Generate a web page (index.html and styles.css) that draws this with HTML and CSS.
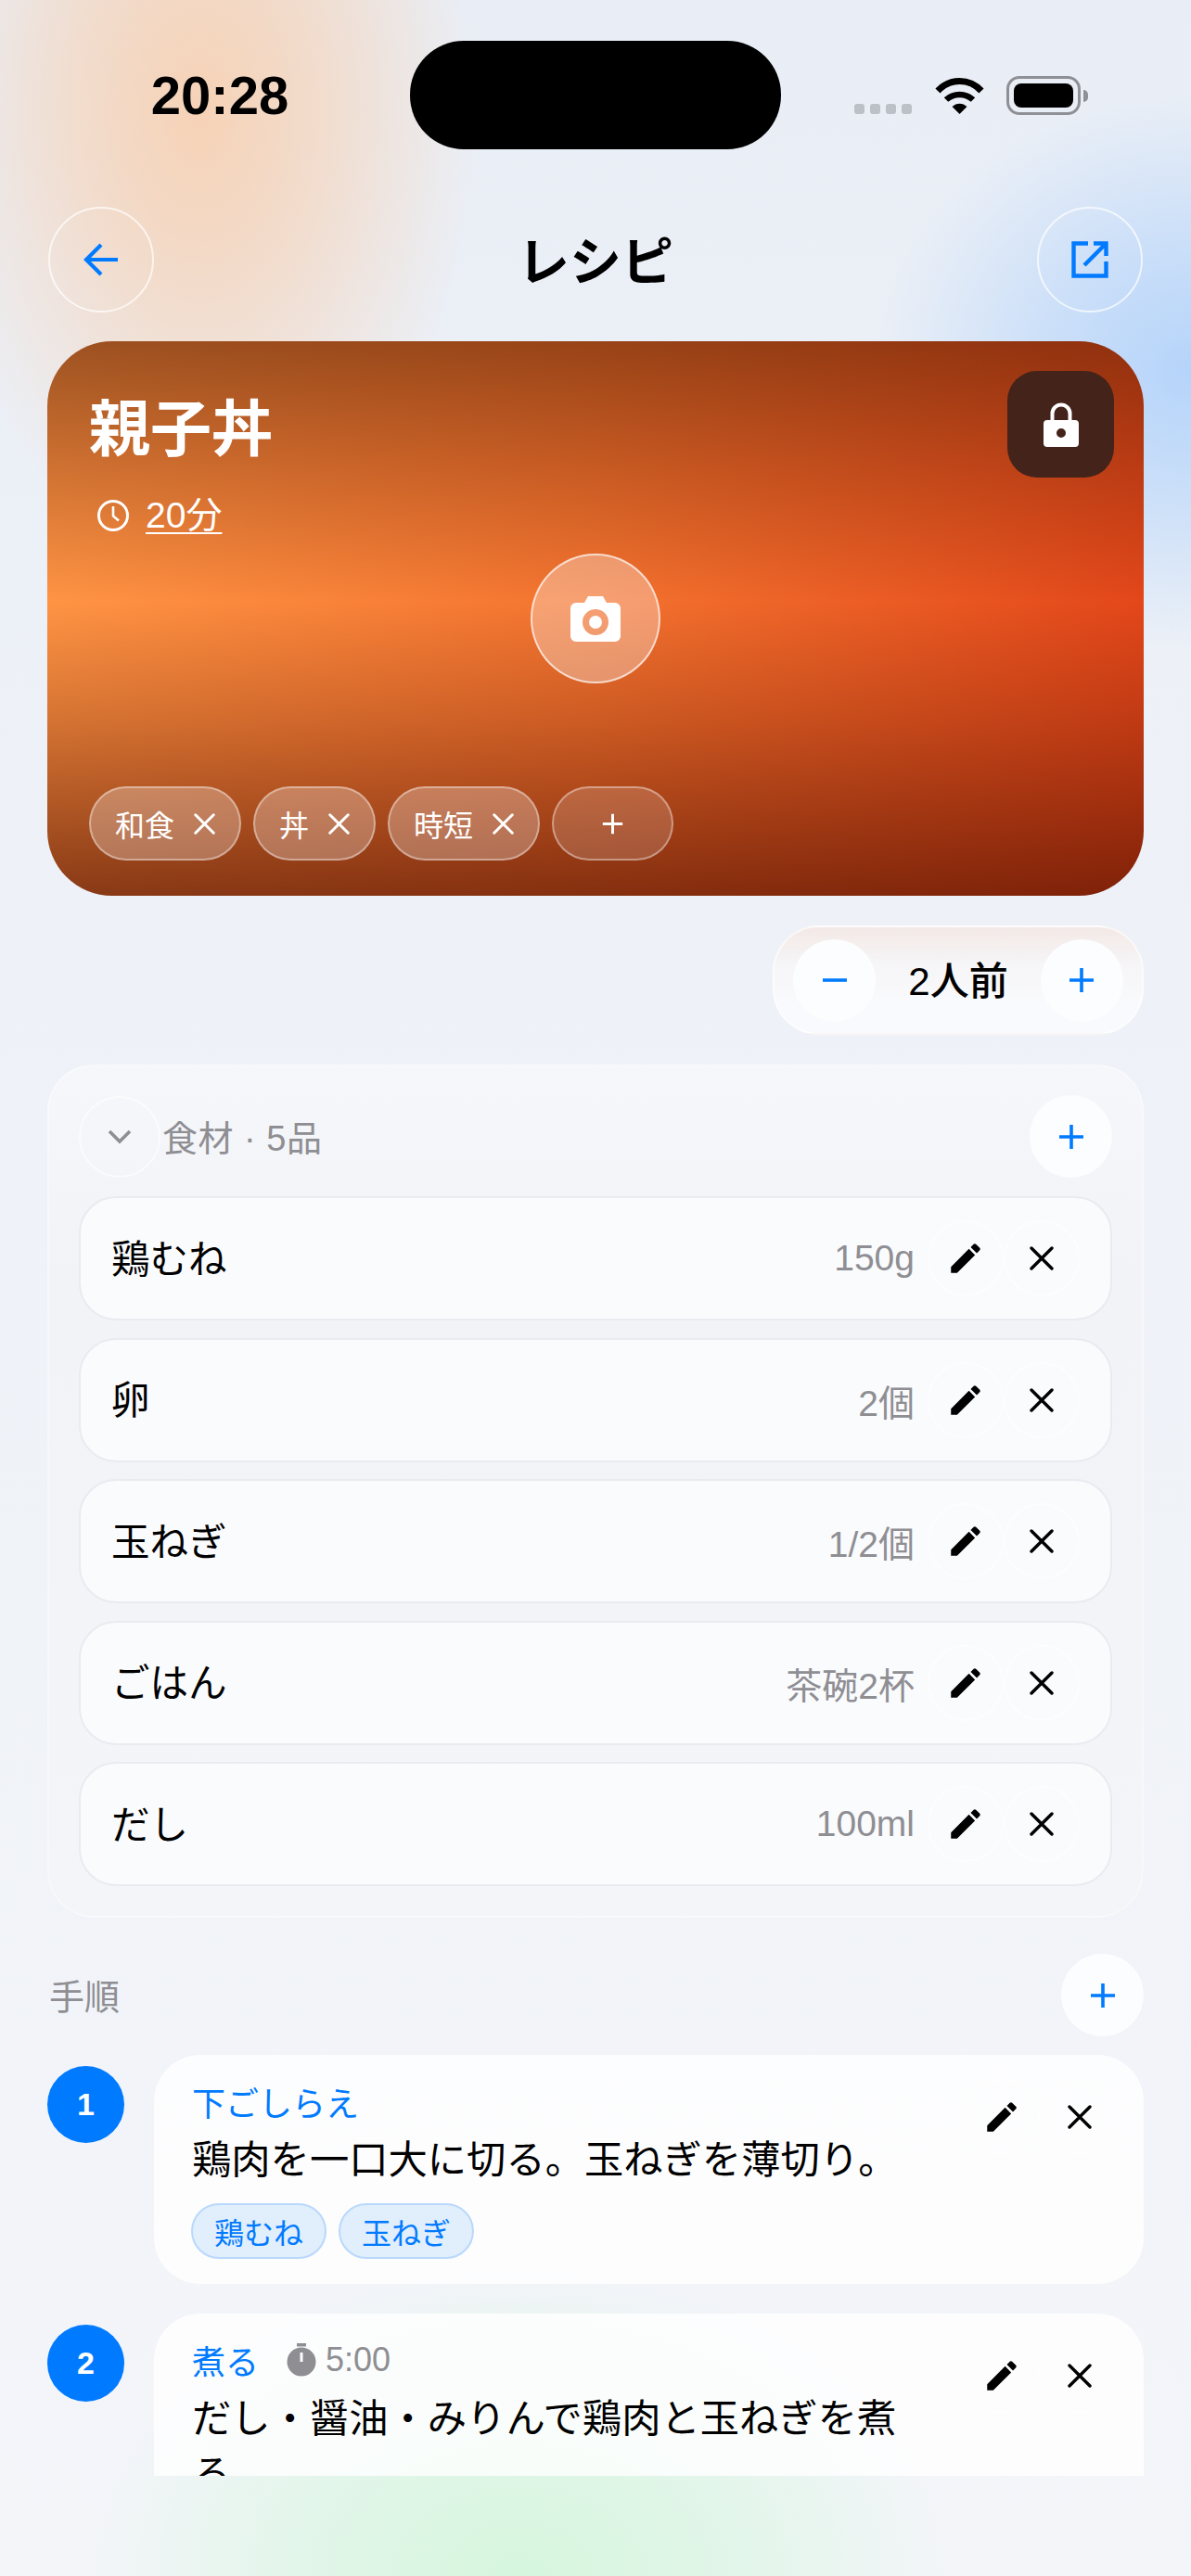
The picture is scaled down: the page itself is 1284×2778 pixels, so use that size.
FILE: index.html
```html
<!DOCTYPE html>
<html>
<head>
    <title>レシピ</title>
    <link rel="stylesheet" href="styles.css">
</head>
<body>
    <svg class="sprite" width="0" height="0">
        <symbol id="pencil" viewBox="0 0 24 24"><path d="M3 17.25V21h3.75L17.81 9.94l-3.75-3.75L3 17.25zM20.71 7.04a1 1 0 0 0 0-1.41l-2.34-2.34a1 1 0 0 0-1.41 0l-1.83 1.83 3.75 3.75 1.83-1.83z"/></symbol>
        <symbol id="close" viewBox="0 0 26 26"><path d="M2 2l22 22M24 2L2 24" fill="none" stroke="currentColor" stroke-width="3.4" stroke-linecap="round"/></symbol>
        <symbol id="plus" viewBox="0 0 28 28"><path d="M14 1v26M1 14h26" fill="none" stroke="currentColor" stroke-width="3.6"/></symbol>
    </svg>

    <div class="app">
        <div class="status-bar">
            <div class="status-time">20:28</div>
            <div class="island"></div>
            <div class="status-icons">
                <div class="signal"><span></span><span></span><span></span><span></span></div>
                <svg class="wifi" width="53" height="40" viewBox="0 0 53 40">
                    <path d="M3 15C16 1 37 1 50 15" fill="none" stroke="#000" stroke-width="7"/>
                    <path d="M12 24.5C20 17 33 17 41 24.5" fill="none" stroke="#000" stroke-width="6.5"/>
                    <path d="M18.5 32C23 27.5 30 27.5 34.5 32L26.5 40Z"/>
                </svg>
                <div class="battery"><div class="battery-fill"></div></div>
                <div class="battery-tip"></div>
            </div>
        </div>

        <div class="nav-bar">
            <div class="nav-btn">
                <svg width="38" height="36" viewBox="0 0 38 36"><path d="M19 2L3 18l16 16M3.500 18H37" fill="none" stroke="#007aff" stroke-width="4.200"/></svg>
            </div>
            <h1 class="nav-title">レシピ</h1>
            <div class="nav-btn">
                <svg width="40" height="40" viewBox="0 0 40 40"><path d="M18 2.500H2.500v35h35V22M24 2.500h13.500V16M37 3L14 26" fill="none" stroke="#007aff" stroke-width="4.400"/></svg>
            </div>
        </div>

        <div class="content">
            <div class="hero">
                <h2 class="hero-title">親子丼</h2>
                <div class="hero-meta">
                    <svg width="36" height="36" viewBox="0 0 36 36"><circle cx="18" cy="18" r="15.500" fill="none" stroke="#fff" stroke-width="3"/><path d="M18 8v10.500l6 5" fill="none" stroke="#fff" stroke-width="2.600"/></svg>
                    <span class="hero-time">20分</span>
                </div>
                <div class="lock-btn">
                    <svg width="38" height="48" viewBox="0 0 38 48"><path d="M9.500 20v-8a9.500 9.500 0 0 1 19 0v8" fill="none" stroke="#fff" stroke-width="4"/><path fill-rule="evenodd" d="M4 19h30a4 4 0 0 1 4 4v21a4 4 0 0 1-4 4H4a4 4 0 0 1-4-4V23a4 4 0 0 1 4-4zM19 28a5 5 0 1 0 0 10 5 5 0 0 0 0-10z" fill="#fff"/></svg>
                </div>
                <div class="camera-btn">
                    <svg width="54" height="49" viewBox="0 0 54 49"><path fill-rule="evenodd" d="M19 0h16l4 7h9a6 6 0 0 1 6 6v30a6 6 0 0 1-6 6H6a6 6 0 0 1-6-6V13a6 6 0 0 1 6-6h9zM27 14a14 14 0 1 0 0 28 14 14 0 0 0 0-28zM27 21a7 7 0 1 1 0 14 7 7 0 0 1 0-14z" fill="#fff"/></svg>
                </div>
                <div class="hero-tags">
                    <div class="hero-tag">和食<svg class="tag-x"><use href="#close"/></svg></div>
                    <div class="hero-tag">丼<svg class="tag-x"><use href="#close"/></svg></div>
                    <div class="hero-tag">時短<svg class="tag-x"><use href="#close"/></svg></div>
                    <div class="hero-tag hero-tag-add"><svg class="tag-x"><use href="#plus"/></svg></div>
                </div>
            </div>

            <div class="servings-row">
                <div class="servings">
                    <div class="round-btn"><svg class="blue-icon" width="28" height="28" viewBox="0 0 28 28"><path d="M1 14h26" stroke="currentColor" stroke-width="3.600"/></svg></div>
                    <div class="servings-text">2人前</div>
                    <div class="round-btn"><svg class="blue-icon" width="28" height="28"><use href="#plus"/></svg></div>
                </div>
            </div>

            <div class="ingredients">
                <div class="section-head">
                    <div class="chevron-btn">
                        <svg width="26" height="16" viewBox="0 0 26 16"><path d="M2 2l11 11L24 2" fill="none" stroke="#8e8e93" stroke-width="3.600"/></svg>
                    </div>
                    <div class="section-title">食材 · 5品</div>
                    <div class="round-btn"><svg class="blue-icon" width="28" height="28"><use href="#plus"/></svg></div>
                </div>
                <div class="ingredient-list">
                    <div class="ingredient">
                        <div class="ingredient-name">鶏むね</div>
                        <div class="ingredient-qty">150g</div>
                        <div class="icon-btn"><svg width="42" height="42"><use href="#pencil"/></svg></div>
                        <div class="icon-btn"><svg width="26" height="26"><use href="#close"/></svg></div>
                    </div>
                    <div class="ingredient">
                        <div class="ingredient-name">卵</div>
                        <div class="ingredient-qty">2個</div>
                        <div class="icon-btn"><svg width="42" height="42"><use href="#pencil"/></svg></div>
                        <div class="icon-btn"><svg width="26" height="26"><use href="#close"/></svg></div>
                    </div>
                    <div class="ingredient">
                        <div class="ingredient-name">玉ねぎ</div>
                        <div class="ingredient-qty">1/2個</div>
                        <div class="icon-btn"><svg width="42" height="42"><use href="#pencil"/></svg></div>
                        <div class="icon-btn"><svg width="26" height="26"><use href="#close"/></svg></div>
                    </div>
                    <div class="ingredient">
                        <div class="ingredient-name">ごはん</div>
                        <div class="ingredient-qty">茶碗2杯</div>
                        <div class="icon-btn"><svg width="42" height="42"><use href="#pencil"/></svg></div>
                        <div class="icon-btn"><svg width="26" height="26"><use href="#close"/></svg></div>
                    </div>
                    <div class="ingredient">
                        <div class="ingredient-name">だし</div>
                        <div class="ingredient-qty">100ml</div>
                        <div class="icon-btn"><svg width="42" height="42"><use href="#pencil"/></svg></div>
                        <div class="icon-btn"><svg width="26" height="26"><use href="#close"/></svg></div>
                    </div>
                </div>
            </div>

            <div class="steps-head">
                <div class="steps-title">手順</div>
                <div class="round-btn"><svg class="blue-icon" width="28" height="28"><use href="#plus"/></svg></div>
            </div>

            <div class="steps">
                <div class="step">
                    <div class="step-num">1</div>
                    <div class="step-card">
                        <div class="step-body">
                            <div class="step-label"><span>下ごしらえ</span></div>
                            <div class="step-text">鶏肉を一口大に切る。玉ねぎを薄切り。</div>
                            <div class="step-tags">
                                <div class="step-tag">鶏むね</div>
                                <div class="step-tag">玉ねぎ</div>
                            </div>
                        </div>
                        <div class="step-actions">
                            <div class="icon-btn"><svg width="42" height="42"><use href="#pencil"/></svg></div>
                            <div class="icon-btn"><svg width="26" height="26"><use href="#close"/></svg></div>
                        </div>
                    </div>
                </div>
                <div class="step">
                    <div class="step-num">2</div>
                    <div class="step-card">
                        <div class="step-body">
                            <div class="step-label">
                                <span>煮る</span>
                                <svg class="timer-icon" width="32" height="36" viewBox="0 0 32 36"><path d="M11 0h10v3.500H11z" fill="#8e8e93"/><circle cx="16" cy="20" r="15.500" fill="#8e8e93"/><path d="M16 10v10" stroke="#fff" stroke-width="3"/></svg>
                                <span class="step-timer">5:00</span>
                            </div>
                            <div class="step-text">だし・醤油・みりんで鶏肉と玉ねぎを煮る</div>
                        </div>
                        <div class="step-actions">
                            <div class="icon-btn"><svg width="42" height="42"><use href="#pencil"/></svg></div>
                            <div class="icon-btn"><svg width="26" height="26"><use href="#close"/></svg></div>
                        </div>
                    </div>
                </div>
            </div>
        </div>
    </div>
</body>
</html>
```

FILE: styles.css
```css
* {
    box-sizing: border-box;
}

body {
    margin: 0;
    font-family: "Liberation Sans", "Noto Sans CJK JP", sans-serif;
    color: #000;
}

.sprite {
    position: absolute;
}

.app {
    width: 1284px;
    height: 2778px;
    overflow: hidden;
    background:
        radial-gradient(ellipse 300px 480px at 215px 120px, #f6d2b6 0%, rgba(246, 210, 182, 0.65) 42%, rgba(246, 210, 182, 0) 100%),
        radial-gradient(ellipse 340px 300px at 1284px 400px, #b5d4fa 0%, rgba(181, 212, 250, 0.6) 45%, rgba(181, 212, 250, 0) 100%),
        radial-gradient(ellipse 460px 330px at 560px 2778px, #d6f6de 0%, rgba(214, 246, 222, 0.6) 50%, rgba(214, 246, 222, 0) 100%),
        linear-gradient(180deg, #e9eef6 0%, #eff2f8 45%, #f3f5f9 100%);
}

/* status bar */
.status-bar {
    display: flex;
    align-items: flex-start;
    height: 223px;
    padding-top: 44px;
}

.status-time {
    width: 442px;
    padding-left: 32px;
    text-align: center;
    font-size: 58px;
    font-weight: 700;
    line-height: 117px;
}

.island {
    width: 400px;
    height: 117px;
    border-radius: 58px;
    background-color: #000;
}

.status-icons {
    display: flex;
    align-items: flex-end;
    height: 42px;
    margin-top: 38px;
    padding-left: 79px;
}

.signal {
    display: flex;
    gap: 6px;
    margin-bottom: 1px;
    margin-right: 25px;
}

.signal span {
    width: 11px;
    height: 11px;
    border-radius: 3px;
    background-color: #bcc0c7;
}

.wifi {
    margin-right: 24px;
    margin-bottom: 1px;
}

.battery {
    width: 80px;
    height: 42px;
    padding: 5px;
    border: 3px solid #8f9095;
    border-radius: 14px;
}

.battery-fill {
    height: 100%;
    border-radius: 8px;
    background-color: #000;
}

.battery-tip {
    width: 5px;
    height: 13px;
    margin: 0 0 14px 3px;
    border-radius: 0 6px 6px 0;
    background-color: #8f9095;
}

/* nav */
.nav-bar {
    display: flex;
    align-items: center;
    justify-content: space-between;
    height: 114px;
    margin-bottom: 31px;
    padding: 0 52px;
}

.nav-btn {
    display: flex;
    align-items: center;
    justify-content: center;
    width: 114px;
    height: 114px;
    border: 2px solid rgba(255, 255, 255, 0.7);
    border-radius: 50%;
}

.nav-title {
    margin: -6px 0 0;
    font-size: 56px;
    font-weight: 700;
}

.content {
    height: 2302px;
    padding: 0 51px;
    overflow: hidden;
}

/* hero card */
.hero {
    position: relative;
    display: flex;
    flex-direction: column;
    height: 598px;
    padding: 55px 45px 38px;
    border-radius: 70px;
    color: #fff;
    background:
        linear-gradient(180deg, rgba(80, 30, 5, 0.56) 0%, rgba(90, 30, 5, 0.3) 22%, rgba(90, 25, 0, 0) 47%, rgba(90, 20, 0, 0.25) 68%, rgba(80, 15, 0, 0.68) 100%),
        linear-gradient(90deg, #ff9444 0%, #f4732f 50%, #e3471a 100%);
}

.hero-title {
    margin: 0;
    font-size: 66px;
    font-weight: 700;
    line-height: 80px;
}

.hero-meta {
    display: flex;
    align-items: center;
    gap: 17px;
    margin-top: 35px;
    padding-left: 8px;
}

.hero-time {
    font-size: 39px;
    line-height: 36px;
    text-decoration: underline;
    text-decoration-thickness: 2px;
    text-underline-offset: 5px;
}

.lock-btn {
    position: absolute;
    top: 32px;
    right: 32px;
    display: flex;
    align-items: center;
    justify-content: center;
    width: 115px;
    height: 115px;
    border-radius: 32px;
    background-color: #43231a;
}

.camera-btn {
    position: absolute;
    top: 229px;
    left: 521px;
    display: flex;
    align-items: center;
    justify-content: center;
    width: 140px;
    height: 140px;
    border: 2px solid rgba(255, 255, 255, 0.65);
    border-radius: 50%;
    background-color: rgba(255, 255, 255, 0.32);
}

.hero-tags {
    display: flex;
    gap: 13px;
    margin-top: auto;
}

.hero-tag {
    display: flex;
    align-items: center;
    gap: 21px;
    height: 80px;
    padding: 0 26px;
    border: 2px solid rgba(255, 255, 255, 0.38);
    border-radius: 40px;
    background-color: rgba(255, 255, 255, 0.27);
    font-size: 32px;
}

.hero-tag-add {
    justify-content: center;
    width: 131px;
    background-color: rgba(255, 255, 255, 0.16);
}

.tag-x {
    width: 23px;
    height: 23px;
    color: #fff;
}

/* servings */
.servings-row {
    display: flex;
    justify-content: flex-end;
    margin-top: 32px;
}

.servings {
    display: flex;
    align-items: center;
    justify-content: space-between;
    width: 400px;
    height: 118px;
    padding: 0 20px;
    border: 2px solid rgba(255, 255, 255, 0.6);
    border-radius: 50px;
    background: linear-gradient(180deg, #f3e9e6 0%, #f6f5f7 35%, #f9fafd 70%);
}

.servings-text {
    margin-top: -6px;
    font-size: 42px;
    font-weight: 500;
}

.round-btn {
    display: flex;
    align-items: center;
    justify-content: center;
    flex-shrink: 0;
    width: 89px;
    height: 89px;
    border-radius: 50%;
    background-color: #fcfdfe;
}

.blue-icon {
    color: #007aff;
}

/* ingredients */
.ingredients {
    height: 920px;
    margin-top: 32px;
    padding: 31px 32px 0 32px;
    border: 2px solid rgba(255, 255, 255, 0.35);
    border-radius: 50px;
    background: linear-gradient(180deg, #f6f7fa 0%, #f1f3f7 25%, #f3f5f8 100%);
}

.section-head {
    display: flex;
    align-items: center;
    height: 89px;
    margin-bottom: 20px;
}

.chevron-btn {
    display: flex;
    align-items: center;
    justify-content: center;
    width: 88px;
    height: 88px;
    border: 2px solid rgba(255, 255, 255, 0.6);
    border-radius: 50%;
}

.section-title {
    flex: 1;
    margin-left: 2px;
    margin-top: -3px;
    color: #8e8e93;
    font-size: 38px;
    letter-spacing: 0.5px;
}

.ingredient-list {
    display: flex;
    flex-direction: column;
    gap: 18.500px;
}

.ingredient {
    display: flex;
    align-items: center;
    height: 134px;
    padding: 0 33px;
    border: 2px solid #e9ebf0;
    border-radius: 40px;
    background-color: #fafbfd;
}

.ingredient-name {
    flex: 1;
    font-size: 41.500px;
    margin-top: -5px;
}

.ingredient-qty {
    margin-right: 14px;
    color: #8e8e93;
    font-size: 39px;
}

.icon-btn {
    display: flex;
    align-items: center;
    justify-content: center;
    flex-shrink: 0;
    width: 82px;
    height: 82px;
    border: 2px solid rgba(255, 255, 255, 0.55);
    border-radius: 50%;
}

/* steps */
.steps-head {
    display: flex;
    align-items: center;
    justify-content: space-between;
    height: 89px;
    margin-top: 39px;
    margin-bottom: 20px;
}

.steps-title {
    padding-left: 2px;
    margin-top: -3px;
    color: #8e8e93;
    font-size: 38px;
}

.steps {
    display: flex;
    flex-direction: column;
    gap: 32px;
}

.step {
    display: flex;
    align-items: flex-start;
    gap: 32px;
}

.step-num {
    display: flex;
    align-items: center;
    justify-content: center;
    flex-shrink: 0;
    width: 83px;
    height: 83px;
    margin-top: 12px;
    border-radius: 50%;
    background-color: #007aff;
    color: #fff;
    font-size: 34px;
    font-weight: 700;
}

.step-card {
    display: flex;
    flex: 1;
    justify-content: space-between;
    padding: 34px 28px 27px 41px;
    border-radius: 50px;
    background-color: rgba(255, 255, 255, 0.8);
}

.step-body {
    width: 790px;
}

.step-label {
    display: flex;
    align-items: center;
    height: 36px;
    margin-top: -2px;
    color: #007aff;
    font-size: 36px;
}

.timer-icon {
    margin-left: 30px;
    margin-right: 10px;
}

.step-timer {
    color: #8e8e93;
    font-size: 36px;
}

.step-text {
    margin-top: 16px;
    font-size: 42.300px;
    line-height: 60px;
}

.step-tags {
    display: flex;
    gap: 13px;
    margin-top: 16px;
    margin-left: -1px;
}

.step-tag {
    display: flex;
    align-items: center;
    height: 60px;
    padding: 0 23px;
    border: 2px solid #b9d8fb;
    border-radius: 30px;
    background-color: #e1eefc;
    color: #007aff;
    font-size: 32px;
}

.step-actions {
    display: flex;
    gap: 2px;
    margin-top: -8px;
}
```
